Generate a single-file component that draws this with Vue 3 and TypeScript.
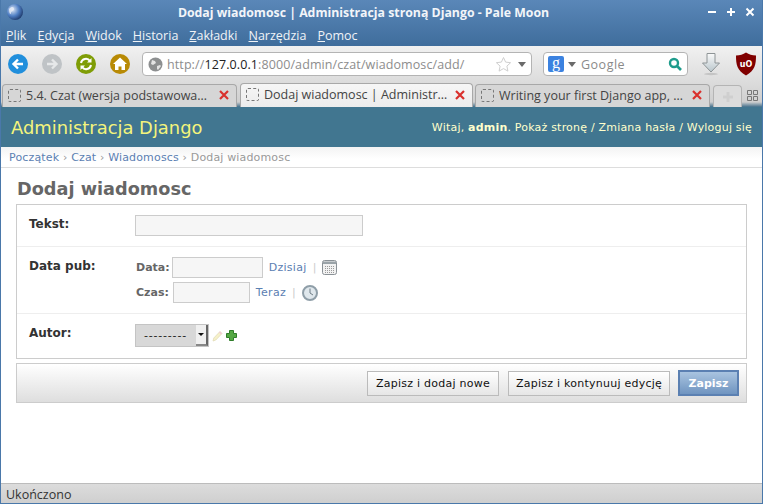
<template>
  <div class="window">
    <header class="chrome">
      <div class="titlebar">
        <svg class="moon" width="18" height="18" viewBox="0 0 18 18">
          <defs>
            <radialGradient id="moonFill" cx="0.35" cy="0.35" r="0.8">
              <stop offset="0" stop-color="#dfe8f5" />
              <stop offset="0.5" stop-color="#4f7fc4" />
              <stop offset="1" stop-color="#10244f" />
            </radialGradient>
          </defs>
          <circle cx="9" cy="9" r="8" fill="url(#moonFill)" />
          <path d="M3 6c3-3 5-2 5 0s-3 2-3 4-2 1-2-4z" fill="#e8eef8" opacity="0.8" />
        </svg>
        <span class="title">Dodaj wiadomosc | Administracja stroną Django - Pale Moon</span>
        <div class="win-btns">
          <svg width="10" height="10" viewBox="0 0 10 10"><path d="M1 5h8" stroke="#fff" stroke-width="2" /></svg>
          <svg width="10" height="10" viewBox="0 0 10 10"><path d="M1 5h8M5 1v8" stroke="#fff" stroke-width="2" /></svg>
          <svg width="10" height="10" viewBox="0 0 10 10"><path d="M1.500 1.500l7 7M8.500 1.500l-7 7" stroke="#fff" stroke-width="2" /></svg>
        </div>
      </div>
      <nav class="menubar">
        <span v-for="m in menu" :key="m.rest"><u>{{ m.key }}</u>{{ m.rest }}</span>
      </nav>
    </header>

    <div class="toolbar">
      <div class="nav-btns">
        <svg width="20" height="20" viewBox="0 0 20 20">
          <circle cx="10" cy="10" r="10" fill="#218fdc" />
          <path d="M15 10H6M10 5.500L5.500 10l4.500 4.500" fill="none" stroke="#fff" stroke-width="2.400" />
        </svg>
        <svg width="20" height="20" viewBox="0 0 20 20">
          <circle cx="10" cy="10" r="10" fill="#bfc3c6" />
          <path d="M5 10h9M10 5.500l4.500 4.500-4.500 4.500" fill="none" stroke="#e6e8e9" stroke-width="2.400" />
        </svg>
        <svg width="20" height="20" viewBox="0 0 20 20">
          <circle cx="10" cy="10" r="10" fill="#7f9d06" />
          <path d="M5 9a5 5 0 0 1 9-2M15 11a5 5 0 0 1-9 2" fill="none" stroke="#fff" stroke-width="2" />
          <path d="M15.500 4v4.500H11zM4.500 16v-4.500H9z" fill="#fff" />
        </svg>
        <svg width="20" height="20" viewBox="0 0 20 20">
          <circle cx="10" cy="10" r="10" fill="#b88a05" />
          <path d="M10 3.500L3 10h2v6h3.500v-3.500h3V16H15v-6h2z" fill="#fff" />
        </svg>
      </div>

      <div class="urlbar">
        <svg width="15" height="15" viewBox="0 0 15 15">
          <circle cx="7.500" cy="7.500" r="7" fill="#8d8f90" />
          <path d="M4 3l3 1 1 2-3 2-2-1zM9 9l3-1 1 1-3 4-1-1z" fill="#e4e4e4" />
        </svg>
        <span class="url"><span class="dim">http://</span>127.0.0.1<span class="dim">:8000/admin/czat/wiadomosc/add/</span></span>
        <svg class="star" width="17" height="17" viewBox="0 0 17 17">
          <path d="M8.500 1.500l2.100 4.600 5 .6-3.700 3.400 1 5-4.400-2.500-4.400 2.500 1-5L1.400 6.700l5-.6z" fill="#fff" stroke="#cfcfcf" />
        </svg>
        <i class="drop"></i>
      </div>

      <div class="searchbar">
        <span class="g-badge">g</span>
        <i class="drop"></i>
        <span class="search-text">Google</span>
        <svg width="14" height="14" viewBox="0 0 14 14">
          <circle cx="6" cy="6" r="4" fill="none" stroke="#1e9c8c" stroke-width="2.400" />
          <path d="M9 9l4 4" stroke="#1e9c8c" stroke-width="2.600" />
        </svg>
      </div>

      <svg class="download" width="20" height="24" viewBox="0 0 20 24">
        <defs>
          <linearGradient id="dlFill" x1="0" y1="0" x2="0" y2="1">
            <stop offset="0" stop-color="#fafafa" />
            <stop offset="1" stop-color="#b9c6cc" />
          </linearGradient>
        </defs>
        <path d="M6 1.500h8V11h4.500L10 20 1.500 11H6z" fill="url(#dlFill)" stroke="#8e9496" />
        <ellipse cx="10" cy="22" rx="7" ry="1.200" fill="#c4c4c4" />
      </svg>

      <svg class="ublock" width="22" height="24" viewBox="0 0 22 24">
        <path d="M11 .5c3 2 6 3 10 3 0 9-1 15-10 20C2 18.500 1 12.500 1 3.500c4 0 7-1 10-3z" fill="#800000" />
        <text x="11" y="15" text-anchor="middle" class="ub-text">uO</text>
      </svg>
    </div>

    <div class="tabstrip">
      <div v-for="t in tabs" :key="t.label" class="tab" :class="{ active: t.active }" :style="{ width: t.width + 'px' }">
        <i class="favicon"></i>
        <span class="tab-label">{{ t.label }}</span>
        <svg width="12" height="12" viewBox="0 0 12 12">
          <path d="M2 2l8 8M10 2l-8 8" stroke="#d9302c" stroke-width="2.200" />
        </svg>
      </div>
      <div class="newtab">
        <svg width="12" height="12" viewBox="0 0 12 12"><path d="M6 1v10M1 6h10" stroke="#cfcfcf" stroke-width="3" /></svg>
      </div>
      <svg class="alltabs" width="11" height="11" viewBox="0 0 11 11">
        <path d="M.5.500h4v4h-4zM6.500.500h4v4h-4zM.5 6.500h4v4h-4zM6.500 6.500h4v4h-4z" fill="none" stroke="#777" />
      </svg>
    </div>

    <main class="page">
      <div class="dj-header">
        <span class="brand">Administracja Django</span>
        <span class="tools">Witaj, <strong>admin</strong>. Pokaż stronę / Zmiana hasła / Wyloguj się</span>
      </div>
      <div class="breadcrumbs">
        <a>Początek</a> › <a>Czat</a> › <a>Wiadomoscs</a> › Dodaj wiadomosc
      </div>

      <div class="content">
        <h1>Dodaj wiadomosc</h1>
        <form class="fieldset" @submit.prevent>
          <div class="row row-text">
            <label class="row-label">Tekst:</label>
            <input class="field field-text" type="text" />
          </div>
          <div class="row row-date">
            <label class="row-label">Data pub:</label>
            <div class="datetime">
              <div class="dt-line">
                <span class="dt-label dt-label-date">Data:</span>
                <input class="field field-date" type="text" />
                <a>Dzisiaj</a>
                <span class="sep">|</span>
                <svg width="15" height="15" viewBox="0 0 15 15">
                  <rect x=".5" y=".5" width="14" height="14" rx="2" fill="#f2f2f2" stroke="#8a9196" />
                  <path d="M1 1.500h13V4H1z" fill="#9aa3a8" />
                  <path d="M3 6.500h9M3 8.500h9M3 10.500h9M3 12.500h9" stroke="#9a9a9a" stroke-dasharray="1 1" />
                </svg>
              </div>
              <div class="dt-line">
                <span class="dt-label">Czas:</span>
                <input class="field field-time" type="text" />
                <a>Teraz</a>
                <span class="sep">|</span>
                <svg width="16" height="16" viewBox="0 0 16 16">
                  <circle cx="8" cy="8" r="7" fill="#dfe7ec" stroke="#8f9ea8" stroke-width="2" />
                  <path d="M8 3.500V8l3 2" fill="none" stroke="#6f7d86" />
                </svg>
              </div>
            </div>
          </div>
          <div class="row row-author">
            <label class="row-label">Autor:</label>
            <div class="select">
              <span class="select-value">---------</span>
              <span class="select-btn"><i></i></span>
            </div>
            <svg class="pencil" width="11" height="12" viewBox="0 0 11 12">
              <path d="M1 11l.8-3L8 1.500 10 3.500 3.800 10z" fill="#f6f1c9" stroke="#e2dcb8" stroke-width=".8" />
              <path d="M8 1.500L10 3.500 9 4.500 7 2.500z" fill="#f3c6dc" />
            </svg>
            <svg class="plus" width="11" height="11" viewBox="0 0 11 11">
              <path d="M3.500.5h4v3h3v4h-3v3h-4v-3h-3v-4h3z" fill="#55a844" stroke="#2f7d2a" />
            </svg>
          </div>
        </form>

        <div class="submit-row">
          <button class="btn btn-add" type="button">Zapisz i dodaj nowe</button>
          <button class="btn btn-continue" type="button">Zapisz i kontynuuj edycję</button>
          <button class="btn btn-default" type="button">Zapisz</button>
        </div>
      </div>
    </main>

    <footer class="statusbar">Ukończono</footer>
  </div>
</template>

<script setup lang="ts">
const menu = [
  { key: 'P', rest: 'lik' },
  { key: 'E', rest: 'dycja' },
  { key: 'W', rest: 'idok' },
  { key: 'H', rest: 'istoria' },
  { key: 'Z', rest: 'akładki' },
  { key: 'N', rest: 'arzędzia' },
  { key: 'P', rest: 'omoc' }
]

const tabs = [
  { label: '5.4. Czat (wersja podstawowa…', width: 235, active: false },
  { label: 'Dodaj wiadomosc | Administr…', width: 233, active: true },
  { label: 'Writing your first Django app, …', width: 235, active: false }
]
</script>

<style>
html,
body {
  margin: 0;
  padding: 0;
  background: #fff;
}
</style>

<style scoped>
.window {
  width: 763px;
  height: 504px;
  box-sizing: border-box;
  display: flex;
  flex-direction: column;
  overflow: hidden;
  border-left: 1px solid #4a78aa;
  border-right: 1px solid #4a78aa;
  border-bottom: 1px solid #4a78aa;
  font-family: "Open Sans", "Noto Sans", sans-serif;
}

.chrome {
  height: 46px;
  flex-shrink: 0;
  background: linear-gradient(#5a87b8, #3f6d9c);
  color: #fff;
}

.titlebar {
  height: 24px;
  display: flex;
  align-items: center;
  padding: 0 7px 0 5px;
}

.moon {
  flex-shrink: 0;
}

.title {
  flex: 1;
  text-align: center;
  font-size: 12.3px;
  font-weight: 700;
  color: #f2f5f9;
  padding-right: 4px;
}

.win-btns {
  display: flex;
  gap: 9px;
}

.menubar {
  height: 22px;
  display: flex;
  align-items: center;
  gap: 11px;
  padding-left: 5px;
  font-size: 12.5px;
  color: #f0f3f7;
}

.toolbar {
  height: 36px;
  flex-shrink: 0;
  display: flex;
  align-items: center;
  padding: 0 0 0 7px;
  background: linear-gradient(#f1f1f1, #dcdcdc);
  box-sizing: border-box;
}

.nav-btns {
  display: flex;
  gap: 14px;
}

.urlbar,
.searchbar {
  height: 24px;
  box-sizing: border-box;
  display: flex;
  align-items: center;
  background: #fff;
  border: 1px solid #b4b4b4;
  border-radius: 4px;
  font-size: 12.5px;
}

.urlbar {
  width: 390px;
  margin-left: 12px;
  padding: 0 5px;
}

.url {
  flex: 1;
  margin-left: 4px;
  color: #222;
  letter-spacing: 0.1px;
}

.dim {
  color: #8d8d8d;
}

.star {
  margin-right: 6px;
}

.drop {
  width: 0;
  height: 0;
  border-left: 4px solid transparent;
  border-right: 4px solid transparent;
  border-top: 5px solid #6a6a6a;
}

.searchbar {
  width: 145px;
  margin-left: 11px;
  padding: 0 5px 0 4px;
}

.g-badge {
  width: 16px;
  height: 16px;
  background: #3b82e0;
  color: #fff;
  border-radius: 2px;
  text-align: center;
  font-family: "Liberation Serif", serif;
  font-size: 16px;
  line-height: 13px;
  margin-right: 4px;
}

.search-text {
  flex: 1;
  margin-left: 5px;
  color: #8a8a8a;
  letter-spacing: 0.5px;
}

.download {
  margin-left: 13px;
}

.ublock {
  margin-left: 14px;
}

.ub-text {
  font-family: "DejaVu Sans", sans-serif;
  font-size: 8px;
  font-weight: 700;
  fill: #fff;
}

.tabstrip {
  height: 25px;
  flex-shrink: 0;
  display: flex;
  align-items: flex-end;
  padding-left: 1px;
  background: linear-gradient(#dcdcdc, #cfcfcf 80%, #44708c);
  box-sizing: border-box;
}

.tab {
  height: 23px;
  box-sizing: border-box;
  flex-shrink: 0;
  display: flex;
  align-items: center;
  padding: 0 6px 2px 5px;
  margin-right: 3px;
  border: 1px solid #a8a8a8;
  border-bottom: none;
  border-radius: 4px 4px 0 0;
  background: #d6d6d6;
  font-size: 12.5px;
  color: #444;
}

.tab.active {
  background: linear-gradient(#f6f6f6, #ececec);
  height: 24px;
  margin-right: 2px;
}

.favicon {
  width: 13px;
  height: 13px;
  box-sizing: border-box;
  flex-shrink: 0;
  border: 1px dashed #777;
  border-radius: 2px;
  margin-right: 5px;
}

.tab-label {
  flex: 1;
  white-space: nowrap;
  overflow: hidden;
}

.newtab {
  width: 29px;
  height: 22px;
  box-sizing: border-box;
  display: flex;
  align-items: center;
  justify-content: center;
  border: 1px solid #b4b4b4;
  border-bottom: none;
  border-radius: 4px 4px 0 0;
  background: #dcdcdc;
}

.alltabs {
  margin: 0 0 6px 5px;
}

.page {
  flex: 1;
  min-height: 0;
  background: #fff;
  font-family: "DejaVu Sans", sans-serif;
}

.dj-header {
  height: 40px;
  box-sizing: border-box;
  display: flex;
  align-items: center;
  justify-content: space-between;
  padding: 0 10px;
  background: #417690;
  color: #fff;
}

.brand {
  font-size: 17.9px;
  color: #f4f47c;
}

.tools {
  font-size: 11px;
  color: #ffc;
  letter-spacing: 0.2px;
}

.tools strong {
  color: #ffc;
}

.breadcrumbs {
  height: 21px;
  box-sizing: border-box;
  padding: 4px 8px 0;
  font-size: 11px;
  letter-spacing: 0.16px;
  color: #999;
  background: linear-gradient(#f3f3f3, #fff 60%);
  border-bottom: 1px solid #ddd;
  white-space: nowrap;
}

a {
  color: #5b80b2;
}

.content {
  padding: 0 15px;
}

h1 {
  margin: 0 0 0 1px;
  padding-top: 10px;
  height: 36px;
  box-sizing: border-box;
  font-size: 17.7px;
  line-height: 22px;
  font-weight: 700;
  color: #666;
}

.fieldset {
  width: 731px;
  box-sizing: border-box;
  border: 1px solid #ccc;
}

.row {
  display: flex;
  align-items: flex-start;
  padding: 10px 12px;
  border-bottom: 1px solid #eee;
  box-sizing: border-box;
}

.row-text {
  height: 42px;
}

.row-date {
  height: 67px;
}

.row-author {
  height: 44px;
  border-bottom: none;
}

.row-label {
  width: 106px;
  flex-shrink: 0;
  font-size: 12px;
  line-height: 18px;
  font-weight: 700;
  color: #333;
}

.field {
  box-sizing: border-box;
  height: 21px;
  padding: 0;
  background: #f6f6f6;
  border: 1px solid #ccc;
  outline: none;
}

.field-text {
  width: 228px;
}

.field-date {
  width: 91px;
}

.field-time {
  width: 77px;
}

.datetime {
  display: flex;
  flex-direction: column;
  gap: 4px;
}

.dt-line {
  display: flex;
  align-items: center;
  height: 21px;
  font-size: 11px;
  color: #5b80b2;
}

.dt-label {
  font-weight: 700;
  color: #666;
  margin-right: 4px;
  margin-left: 1px;
}

.dt-label-date {
  margin-right: 2px;
}

.dt-line a {
  margin-left: 6px;
  letter-spacing: 0.3px;
}

.sep {
  color: #ccc;
  margin: 0 6px 0 6px;
}

.select {
  width: 74px;
  height: 23px;
  box-sizing: border-box;
  display: flex;
  background: #d8d8d8;
  border: 1px solid #c4c4c4;
}

.select-value {
  flex: 1;
  padding-left: 8px;
  font-size: 11px;
  letter-spacing: 0.8px;
  line-height: 21px;
  color: #222;
}

.select-btn {
  width: 12px;
  display: flex;
  align-items: center;
  justify-content: center;
  background: #f0f0f0;
  border-right: 2px solid #666;
  border-bottom: 2px solid #888;
  box-sizing: border-box;
}

.select-btn i {
  width: 0;
  height: 0;
  border-left: 3px solid transparent;
  border-right: 3px solid transparent;
  border-top: 3px solid #111;
}

.pencil {
  margin: 6px 0 0 3px;
}

.plus {
  margin: 6px 0 0 3px;
}

.submit-row {
  width: 731px;
  height: 40px;
  margin-top: 4px;
  box-sizing: border-box;
  display: flex;
  align-items: center;
  justify-content: flex-end;
  padding-right: 7px;
  background: linear-gradient(#fff, #dedede);
  border: 1px solid #ccc;
}

.btn {
  height: 25px;
  box-sizing: border-box;
  padding: 0;
  font-family: "DejaVu Sans", sans-serif;
  font-size: 11px;
  letter-spacing: 0.25px;
  color: #111;
  background: linear-gradient(#fff, #e6e6e6);
  border: 1px solid #bbb;
}

.btn-add {
  width: 132px;
}

.btn-continue {
  width: 162px;
  margin-left: 9px;
}

.btn-default {
  width: 61px;
  height: 26px;
  margin-left: 8px;
  letter-spacing: 0;
  font-weight: 700;
  color: #fff;
  background: linear-gradient(#a9c4e0, #6f94c0);
  border: 2px solid #5b80b2;
}

.statusbar {
  height: 20px;
  flex-shrink: 0;
  box-sizing: border-box;
  padding: 2px 5px 0;
  font-size: 12.5px;
  color: #333;
  background: linear-gradient(#dcdcdc, #cfcfcf);
  border-top: 1px solid #bcbcbc;
}
</style>
